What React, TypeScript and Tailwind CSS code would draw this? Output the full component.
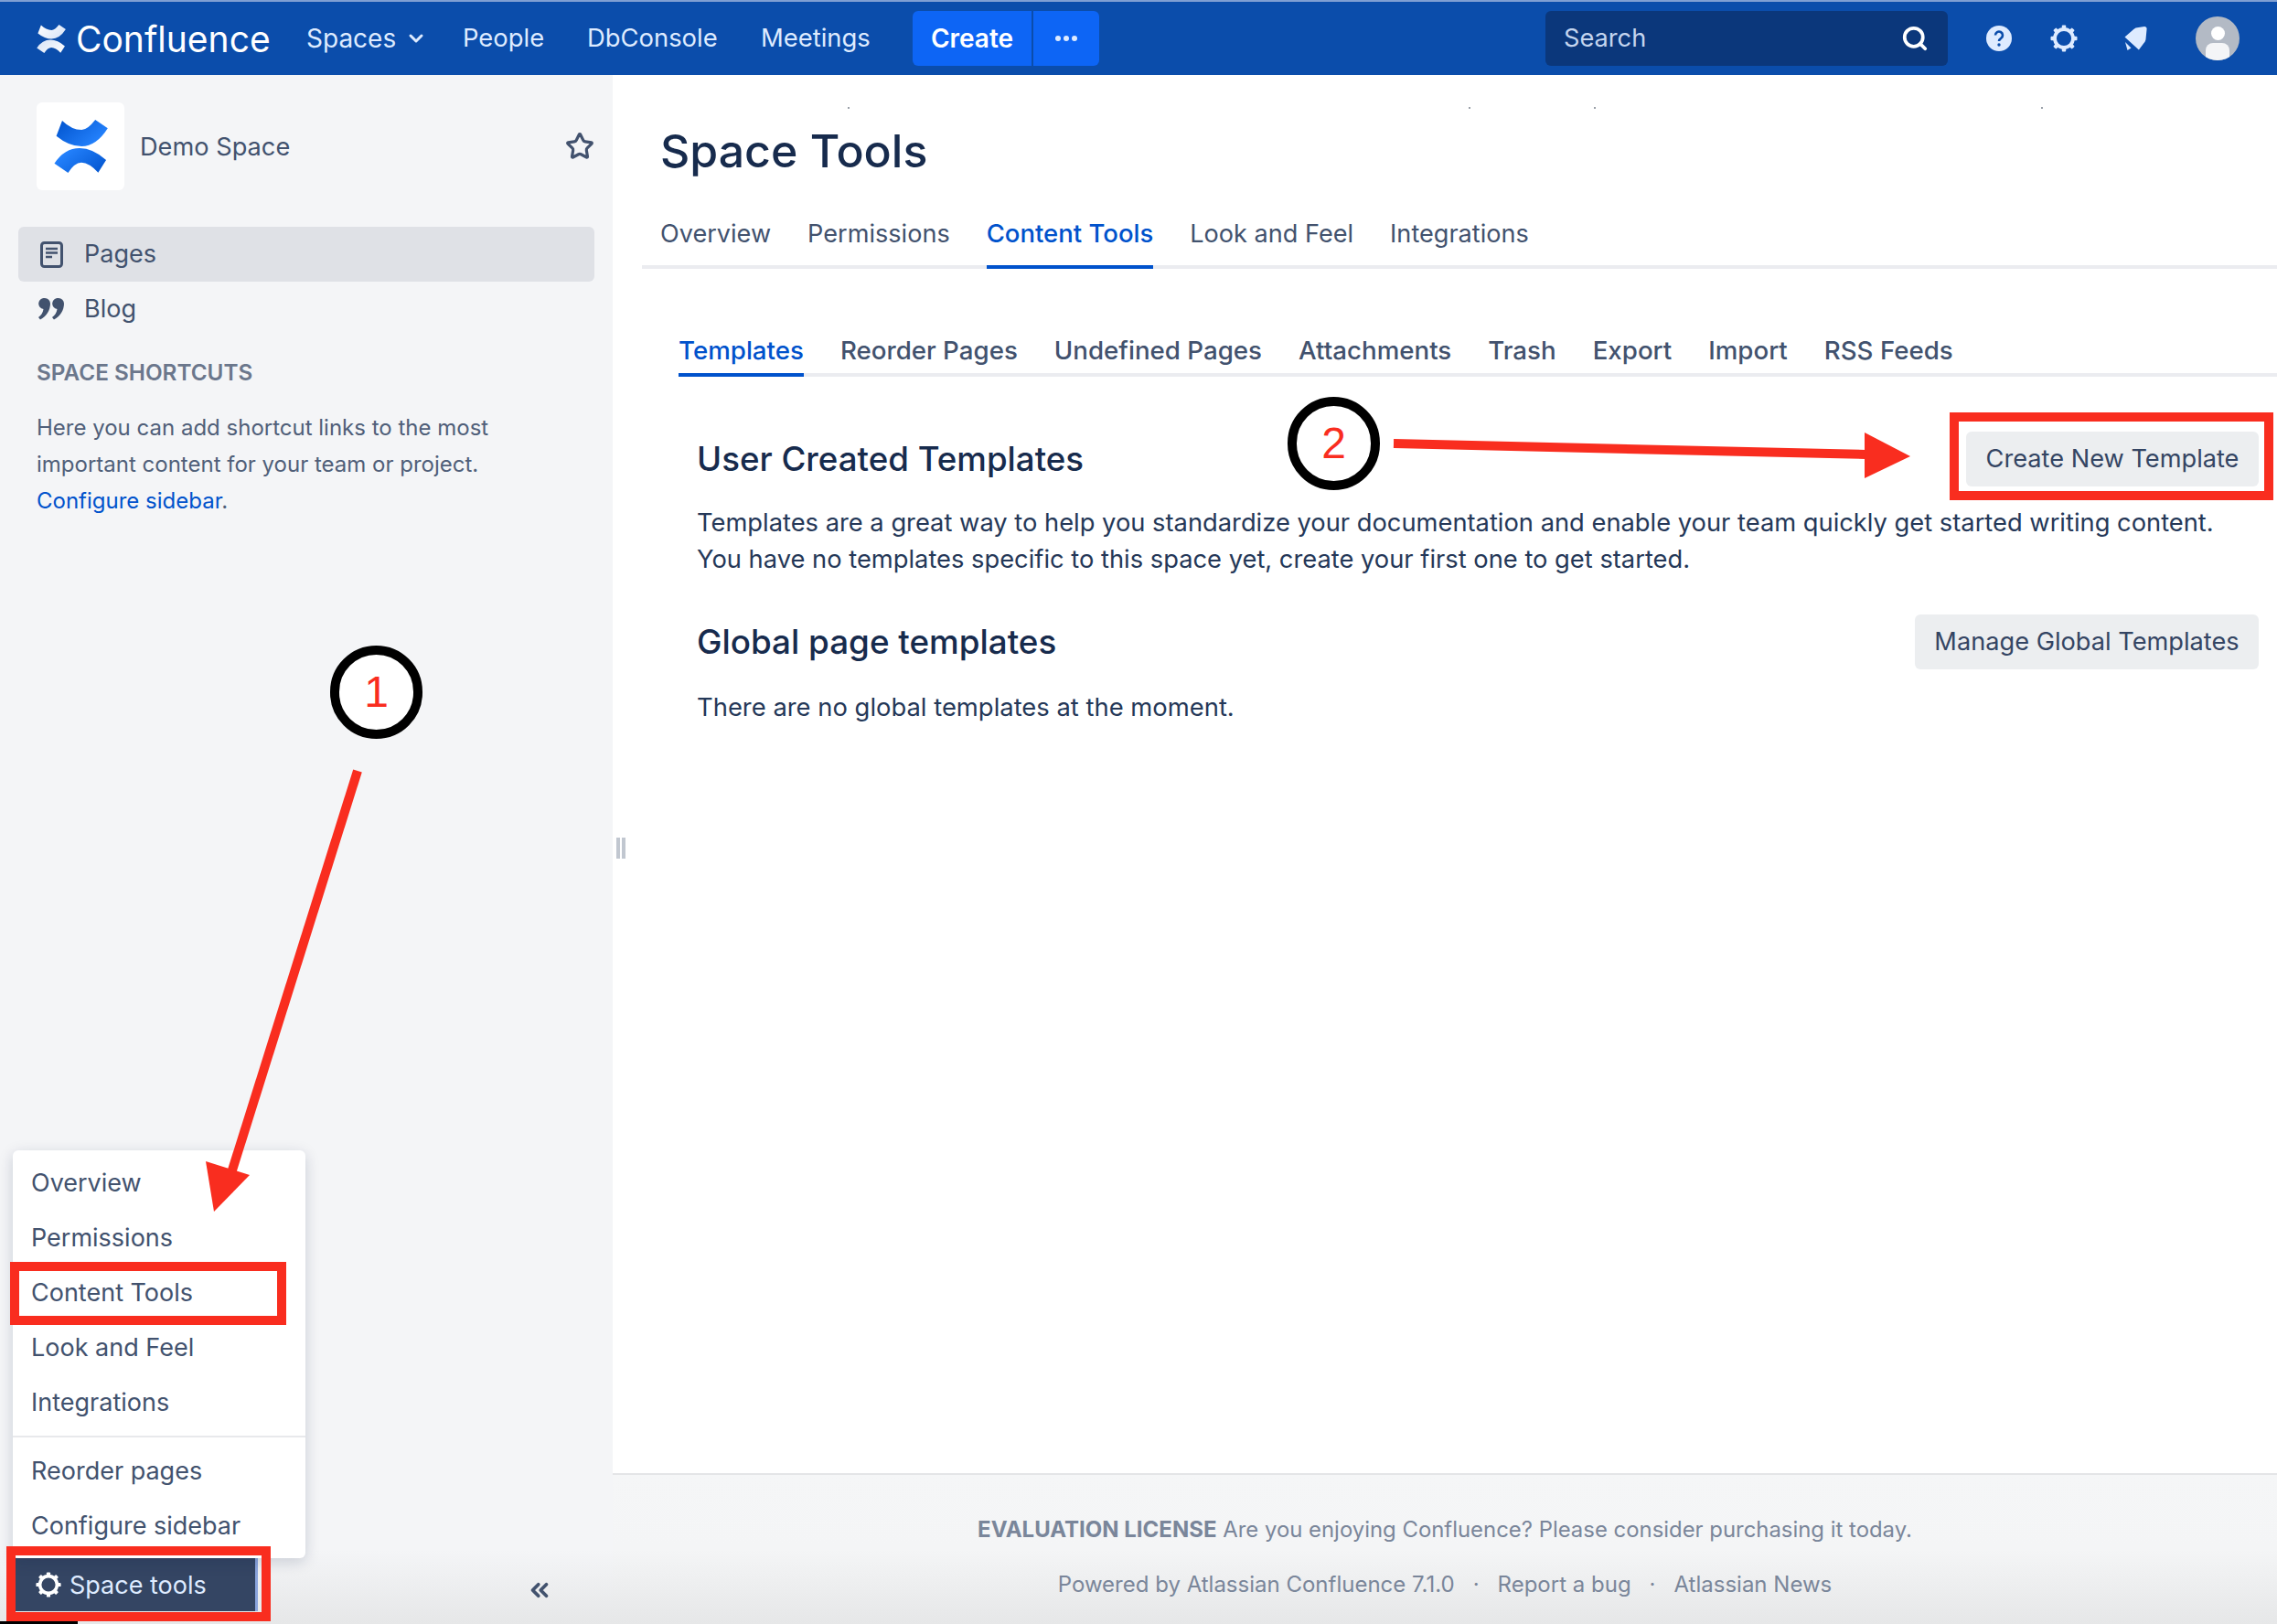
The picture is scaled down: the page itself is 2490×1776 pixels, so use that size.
import React from "react";
import { Search, Star, ChevronDown, ChevronsLeft } from "lucide-react";

const Logo = ({ fillA, fillB, id, className }: { fillA: string; fillB: string; id: string; className: string }) => (
  <svg viewBox="0 0 61 58" preserveAspectRatio="none" className={className}>
    <defs>
      <linearGradient id={id + "a"} x1="0" y1="0" x2="1" y2="0.6">
        <stop offset="0" stopColor={fillA} />
        <stop offset="1" stopColor={fillB} />
      </linearGradient>
      <linearGradient id={id + "b"} x1="1" y1="1" x2="0" y2="0.4">
        <stop offset="0" stopColor={fillA} />
        <stop offset="1" stopColor={fillB} />
      </linearGradient>
    </defs>
    <path d="M9.3 1Q20 11 31.3 11Q38 11 46.7 0L60.8 9.3Q48 29 31.3 29Q17 29 2.7 17.7Z" fill={`url(#${id}a)`} />
    <path d="M59 44Q44 31 29 31Q12 31 0.5 47.7L16 58Q23 47 31 46.7Q40 47 50 57.7Z" fill={`url(#${id}b)`} />
  </svg>
);

const Gear = ({ className, color }: { className: string; color: string }) => (
  <svg viewBox="0 0 32 32" className={className}>
    <circle cx="16" cy="16" r="10" fill="none" stroke={color} strokeWidth="3.800" />
    {[0, 45, 90, 135, 180, 225, 270, 315].map((a) => (
      <rect key={a} x="13.800" y="1.500" width="4.400" height="5" rx="1" fill={color} transform={`rotate(${a} 16 16)`} />
    ))}
  </svg>
);

const navCls = "text-[27.4px] leading-none text-[#deebff]";

const Header = () => (
  <header className="flex h-[82px] shrink-0 items-center border-t-2 border-[#7f9fd3] bg-[#0b4dab]">
    <Logo id="h" fillA="#ffffff" fillB="#dbe6f7" className="ml-[40px] h-[31px] w-[32px]" />
    <span className="ml-[11px] w-[252px] text-[39px] leading-none text-white">Confluence</span>
    <div className="flex w-[171px] items-center gap-[10px]">
      <span className="text-[28px] leading-none text-[#deebff]">Spaces</span>
      <ChevronDown className="h-[24px] w-[24px] text-[#deebff]" strokeWidth={3} />
    </div>
    <span className={`${navCls} w-[136px]`}>People</span>
    <span className={`${navCls} w-[190px]`}>DbConsole</span>
    <span className={`${navCls} w-[166px]`}>Meetings</span>
    <div className="flex h-[60px] w-[204px] overflow-hidden rounded-[6px] bg-[#0d65f5]">
      <div className="flex w-[132px] items-center justify-center border-r-2 border-[#0b4dab] text-[28px] font-semibold text-white">Create</div>
      <div className="flex flex-1 items-center justify-center gap-[3px]">
        <span className="h-[6px] w-[6px] rounded-full bg-[#deebff]" />
        <span className="h-[6px] w-[6px] rounded-full bg-[#deebff]" />
        <span className="h-[6px] w-[6px] rounded-full bg-[#deebff]" />
      </div>
    </div>
    <div className="ml-[488px] flex h-[60px] w-[440px] items-center justify-between rounded-[6px] bg-[#0b377b] pl-[20px] pr-[21px]">
      <span className="text-[27.2px] leading-none text-[#c4d5ef]">Search</span>
      <Search className="h-[30px] w-[30px] text-white" strokeWidth={3} />
    </div>
    <svg viewBox="0 0 28 28" className="ml-[42px] h-[28px] w-[28px]">
      <circle cx="14" cy="14" r="14" fill="#deebff" />
      <path d="M10 10.5a4 4 0 1 1 6.3 3.3c-1.4 1-2.3 1.6-2.3 3.2" fill="none" stroke="#0b4dab" strokeWidth="2.6" />
      <circle cx="14" cy="21" r="1.7" fill="#0b4dab" />
    </svg>
    <Gear color="#deebff" className="ml-[41px] h-[32px] w-[32px]" />
    <svg viewBox="0 0 28 28" className="ml-[48px] h-[28px] w-[28px]">
      <path d="M24 1c1.6 0 2.6 1 2.6 2.6L25.5 15c-.2 1.5-1 3-2 4l-5.600 7.500L2.500 12.500 10 6c1.500-1.200 3-2.500 4.500-3.400Z" fill="#deebff" />
      <path d="M3 18l6.500 6.500-4 2.500Z" fill="#deebff" />
    </svg>
    <div className="ml-[52px] flex h-[48px] w-[48px] flex-col items-center justify-end overflow-hidden rounded-full bg-[#b3bac5]">
      <span className="mb-[3px] h-[15px] w-[15px] rounded-full bg-white" />
      <span className="h-[19px] w-[26px] rounded-t-[8px] bg-[#f4f5f7]" />
    </div>
  </header>
);

const sideCls = "text-[24px] leading-[40px] text-[#505f79]";

const SpaceToolsMenuItem = ({ children }: { children: React.ReactNode }) => (
  <div className="flex h-[60px] items-center pl-[20px] text-[27px] text-[#42526e]">{children}</div>
);

const Sidebar = () => (
  <aside className="flex w-[670px] shrink-0 flex-col bg-[#f4f5f7]">
    <div className="mt-[30px] flex h-[96px] items-center pl-[40px] pr-[20px]">
      <div className="flex h-[96px] w-[96px] items-center justify-center rounded-[6px] bg-white">
        <Logo id="s" fillA="#0052cc" fillB="#2684ff" className="h-[58px] w-[59px]" />
      </div>
      <span className="ml-[17px] flex-1 pt-[3px] text-[27.2px] text-[#42526e]">Demo Space</span>
      <Star className="h-[32px] w-[32px] text-[#42526e]" strokeWidth={2.4} />
    </div>
    <div className="mt-[40px] ml-[20px] flex h-[60px] w-[630px] items-center rounded-[6px] bg-[#dfe1e6] pl-[24px]">
      <svg viewBox="0 0 25 29" className="h-[29px] w-[25px]">
        <rect x="1.500" y="1.500" width="22" height="26" rx="3" fill="none" stroke="#42526e" strokeWidth="3" />
        <path d="M6 8h13M6 12.500h13M6 17h7" stroke="#42526e" strokeWidth="2.400" />
      </svg>
      <span className="ml-[23px] text-[27px] text-[#42526e]">Pages</span>
    </div>
    <div className="ml-[20px] flex h-[60px] items-center pl-[22px]">
      <svg viewBox="0 0 29 24" className="h-[24px] w-[29px]">
        <path d="M7 0a6 6 0 0 1 6 6c0 7-4 14-11 17.500L0 21c3-2 5-5 5.500-9A6 6 0 0 1 7 0ZM22 0a6 6 0 0 1 6 6c0 7-4 14-11 17.500L15 21c3-2 5-5 5.500-9A6 6 0 0 1 22 0Z" fill="#42526e" />
      </svg>
      <span className="ml-[21px] text-[27px] text-[#42526e]">Blog</span>
    </div>
    <div className="mt-[19px] pl-[40px] text-[24.3px] font-semibold leading-[40px] text-[#6b778c]">SPACE SHORTCUTS</div>
    <p className={`mt-[21px] pl-[40px] ${sideCls}`}>
      Here you can add shortcut links to the most
      <br />
      important content for your team or project.
      <br />
      <span className="text-[#0052cc]">Configure sidebar</span>.
    </p>
    <div className="flex-1" />
    <div className="flex h-[81px] items-start bg-gradient-to-b from-[#f4f5f7] to-[#e6e7e8] pl-[17px] pt-[9px]">
      <div className="flex h-[58px] w-[265px] items-center border-r-[3px] border-[#8aa4dd] bg-[#344563] pl-[21px]">
        <Gear color="#ffffff" className="h-[30px] w-[30px]" />
        <span className="ml-[8px] pt-[2px] text-[27px] text-[#deebff]">Space tools</span>
      </div>
      <ChevronsLeft className="ml-[293px] mt-[20px] h-[30px] w-[30px] text-[#42526e]" strokeWidth={3} />
    </div>
  </aside>
);

const mainTabs = ["Overview", "Permissions", "Content Tools", "Look and Feel", "Integrations"];
const subTabs = ["Templates", "Reorder Pages", "Undefined Pages", "Attachments", "Trash", "Export", "Import", "RSS Feeds"];

const Main = () => (
  <main className="relative flex min-w-0 flex-1 flex-col bg-white">
    <div className="flex-1 pl-[32px]">
      <h1 className="ml-[20px] mt-[50px] text-[50px] font-medium leading-[66px] text-[#172b4d]">Space Tools</h1>
      <div className="mt-[26px] flex h-[70px] gap-[40px] border-b-[4px] border-[#ebecf0] pb-[2px] pl-[20px]">
        {mainTabs.map((t) => (
          <div
            key={t}
            className={
              t === "Content Tools"
                ? "-mb-[6px] flex h-[70px] items-center border-b-[4px] border-[#0052cc] pb-[2px] text-[27.5px] font-medium text-[#0052cc]"
                : "flex h-[64px] items-center text-[27.1px] text-[#42526e]"
            }
          >
            {t}
          </div>
        ))}
      </div>
      <div className="mt-[60px] ml-[40px] flex h-[58px] gap-[40px] border-b-[4px] border-[#ebecf0]">
        {subTabs.map((t) => (
          <div
            key={t}
            className={
              t === "Templates"
                ? "-mb-[4px] flex h-[58px] items-center border-b-[4px] border-[#0052cc] pt-[6px] text-[27.7px] font-medium text-[#0052cc]"
                : "flex h-[54px] items-center pt-[6px] text-[27.7px] font-medium text-[#42526e]"
            }
          >
            {t}
          </div>
        ))}
      </div>
      <div className="ml-[60px] mr-[20px] mt-[60px]">
        <div className="flex h-[60px] items-center justify-between">
          <h2 className="text-[36.7px] font-medium text-[#172b4d]">User Created Templates</h2>
          <button className="h-[60px] w-[320px] rounded-[6px] bg-[#eceef0] text-[27.2px] text-[#344563]">Create New Template</button>
        </div>
        <p className="mt-[20px] text-[27.3px] leading-[40px] text-[#253858]">
          Templates are a great way to help you standardize your documentation and enable your team quickly get started writing content.
          <br />
          You have no templates specific to this space yet, create your first one to get started.
        </p>
        <div className="mt-[40px] flex h-[60px] items-center justify-between">
          <h2 className="text-[36.8px] font-medium text-[#172b4d]">Global page templates</h2>
          <button className="h-[60px] w-[376px] rounded-[6px] bg-[#eceef0] text-[27.2px] text-[#344563]">Manage Global Templates</button>
        </div>
        <p className="mt-[21px] text-[27.4px] leading-[40px] text-[#253858]">There are no global templates at the moment.</p>
      </div>
    </div>
    <footer className="flex h-[165px] shrink-0 flex-col items-center border-t-2 border-[#e4e5e7] bg-gradient-to-b from-[#f5f6f7] via-[#f4f5f6] to-[#e6e7e8] pt-[40px] text-[23.9px] leading-[40px] text-[#7a869a]">
      <div>
        <span className="text-[24px] font-bold">EVALUATION LICENSE</span> Are you enjoying Confluence? Please consider purchasing it today.
      </div>
      <div className="mt-[20px] flex gap-[20px] text-[24px]">
        <span>Powered by Atlassian Confluence 7.1.0</span>
        <span>·</span>
        <span>Report a bug</span>
        <span>·</span>
        <span>Atlassian News</span>
      </div>
    </footer>
    <div className="absolute left-[4px] top-[834px] flex gap-[2px]">
      <span className="h-[23px] w-[4px] bg-[#c1c7d0]" />
      <span className="h-[23px] w-[4px] bg-[#c1c7d0]" />
    </div>
  </main>
);

const RedBox = ({ className }: { className: string }) => <div className={`absolute border-[10px] border-[#f92d1f] ${className}`} />;

const Ring = ({ n, className }: { n: string; className: string }) => (
  <div className={`absolute flex h-[102px] w-[101px] items-center justify-center rounded-full border-[10px] border-black bg-white text-[48px] leading-none text-[#f92d1f] [font-family:'Liberation_Sans',sans-serif] ${className}`}>{n}</div>
);

export default function App() {
  return (
    <div className="relative flex h-[1776px] w-[2490px] flex-col overflow-hidden bg-white [font-family:Inter,'Liberation_Sans',sans-serif]">
      <Header />
      <div className="flex min-h-0 flex-1">
        <Sidebar />
        <Main />
      </div>

      <div className="absolute left-[14px] top-[1258px] h-[446px] w-[320px] rounded-[6px] bg-white pt-[6px] shadow-[0_4px_16px_rgba(9,30,66,0.18)]">
        <SpaceToolsMenuItem>Overview</SpaceToolsMenuItem>
        <SpaceToolsMenuItem>Permissions</SpaceToolsMenuItem>
        <SpaceToolsMenuItem>Content Tools</SpaceToolsMenuItem>
        <SpaceToolsMenuItem>Look and Feel</SpaceToolsMenuItem>
        <SpaceToolsMenuItem>Integrations</SpaceToolsMenuItem>
        <div className="mt-[6px] mb-[7px] h-[2px] bg-[#e8e9ec]" />
        <SpaceToolsMenuItem>Reorder pages</SpaceToolsMenuItem>
        <SpaceToolsMenuItem>Configure sidebar</SpaceToolsMenuItem>
      </div>

      <RedBox className="left-[11px] top-[1380px] h-[69px] w-[302px]" />
      <RedBox className="left-[7px] top-[1691px] h-[82px] w-[289px]" />
      <RedBox className="left-[2132px] top-[451px] h-[96px] w-[354px]" />

      <Ring n="1" className="left-[361px] top-[706px]" />
      <Ring n="2" className="left-[1408px] top-[434px]" />

      <svg viewBox="0 0 2490 1776" className="pointer-events-none absolute inset-0 h-full w-full">
        <path d="M391 843L252 1286" stroke="#f92d1f" strokeWidth="10" fill="none" />
        <path d="M225 1270L273 1285L234 1325Z" fill="#f92d1f" />
        <path d="M1524 485L2040 497" stroke="#f92d1f" strokeWidth="10" fill="none" />
        <path d="M2039 473L2089 499L2039 523Z" fill="#f92d1f" />
        <g fill="#9aa0a8">
          <rect x="927" y="117" width="2" height="2" />
          <rect x="1606" y="117" width="2" height="2" />
          <rect x="1743" y="117" width="2" height="2" />
          <rect x="2232" y="117" width="2" height="2" />
        </g>
      </svg>
      <div className="absolute bottom-0 left-0 h-[3px] w-[85px] bg-black" />
    </div>
  );
}
